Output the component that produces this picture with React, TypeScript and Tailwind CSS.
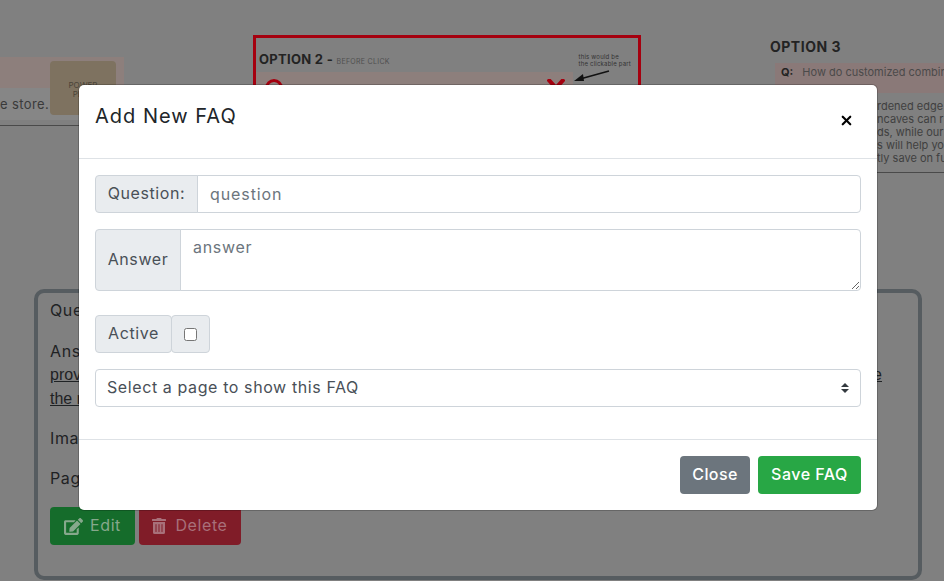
import { X } from "lucide-react";
import { FaEdit, FaTrashAlt } from "react-icons/fa";

const font = "[font-family:Inter,'Liberation_Sans',sans-serif]";

// what is left visible of the faq preview page behind the modal, colours already dimmed
const PageBehind = () => {
    return (
        <div className="w-[944px] h-[581px] overflow-hidden bg-[#808080] flex flex-col text-[#1f2224]">
            <div className="h-[289px] shrink-0 flex items-start">
                <div className="relative w-[124px] mt-[57px] shrink-0 h-[69px] border-b border-[#4a4a4a]">
                    <div className="h-[31px] bg-[#8d7f7c]"></div>
                    <div className="h-[32px] bg-[#868686] text-[13px] tracking-[0.4px] leading-[32px] text-right pr-[80px] text-[#3a3a3a] whitespace-nowrap">e store.</div>
                    <div className="absolute left-[50px] top-[4px] w-[66px] h-[54px] bg-[#7e7260] rounded-[4px] text-center text-[8px] leading-[9px] pt-[20px] text-[#4a4438]">POWER<br />PLUS</div>
                </div>
                <div className="relative ml-[129px] mt-[35px] w-[388px] h-[100px] shrink-0 border-[3px] border-[#a5000f] px-[3px] pt-[12px]">
                    <div className="flex justify-between">
                        <p className="text-[13px] font-bold leading-[18px] tracking-[0.3px] text-[#232323]">OPTION 2 - <span className="text-[7px] font-normal tracking-[0.3px] text-[#4f4f4f]">BEFORE CLICK</span></p>
                        <p className="text-[6px] leading-[7px] mt-[3px] mr-[4px] whitespace-nowrap tracking-[0.2px] text-[#333]">this would be<br />the clickable part</p>
                    </div>
                    <div className="flex items-start justify-between w-[317px] h-[30px] -ml-[3px] mt-[1px] bg-[#8d7f7c] pl-[9px] pr-[8px] pt-[7px]">
                        <svg width="18" height="18" viewBox="0 0 18 18"><circle cx="9" cy="9" r="7.5" fill="none" stroke="#a5000f" strokeWidth="3" /></svg>
                        <svg width="18" height="18" viewBox="0 0 18 18"><path d="M1 0 L17 18 M17 0 L1 18" stroke="#a5000f" strokeWidth="4" fill="none" /></svg>
                    </div>
                    <svg className="absolute left-[316px] top-[31px]" width="40" height="16" viewBox="0 0 40 16"><path d="M37 2 L8 10" stroke="#111" strokeWidth="1.5" /><path d="M2 12 L11 5 L12 12 Z" fill="#111" /></svg>
                </div>
                <div className="ml-[129px] mt-[39px] w-[175px] shrink-0">
                    <p className="text-[14px] font-bold leading-[16px] tracking-[0.5px] text-[#232323]">OPTION 3</p>
                    <div className="mt-[8px] ml-[5px] h-[30px] bg-[#8a7978] pl-[6px] text-[11px] leading-[14px] pt-[2px] whitespace-nowrap text-[#4a4a4a]"><b className="text-[#232323] mr-[6px]">Q:</b> How do customized combin</div>
                    <div className="h-[80px] border-b border-[#4a4a4a] pl-[107px] text-[11px] leading-[13px] pt-[7px] text-[#3f3f3f] whitespace-nowrap">
                        <p>rdened edge</p>
                        <p>ncaves can r</p>
                        <p>ds, while our</p>
                        <p>s will help yo</p>
                        <p>tly save on fu</p>
                    </div>
                </div>
            </div>
            <div className="ml-[34px] w-[888px] h-[291px] shrink-0 border-[4px] border-[#565c60] rounded-[10px] pl-[12px] pt-[5px] text-[16px] tracking-[0.6px]">
                <p className="leading-[24px]">Question</p>
                <p className="mt-[17px] leading-[24px]">Answer</p>
                <p className="leading-[24px] underline tracking-normal [font-family:'Liberation_Sans',sans-serif] flex justify-between w-[832px]"><span>provide</span><span>e</span></p>
                <p className="leading-[24px] underline tracking-normal [font-family:'Liberation_Sans',sans-serif]">the right</p>
                <p className="mt-[15px] leading-[24px]">Image</p>
                <p className="mt-[16px] leading-[24px]">Page</p>
                <div className="flex gap-[4px] mt-[17px]">
                    <button className="w-[85px] h-[38px] bg-[#156c2b] text-[#86a88c] rounded pb-[2px] flex items-center justify-center gap-[7px]"><FaEdit className="w-[19px] h-[17px] mt-[2px]" />Edit</button>
                    <button className="w-[102px] h-[38px] bg-[#801c28] text-[#a8707a] rounded pb-[2px] flex items-center justify-center gap-[9px]"><FaTrashAlt className="w-[14px] h-[16px] mt-[2px]" />Delete</button>
                </div>
            </div>
        </div>
    );
};

const App = () => {
    return (
        <div className={`relative w-[944px] h-[581px] overflow-hidden ${font}`}>
            <PageBehind />
            <div className="absolute left-[79px] top-[85px] w-[798px] h-[425px] bg-white rounded-[5px] shadow-[0_0_0_1px_rgba(0,0,0,0.2)] text-[#495057] text-[16px] tracking-[0.6px] flex flex-col">
                <div className="h-[74px] shrink-0 border-b border-[#dee2e6] px-[16px] flex justify-between">
                    <h5 className="text-[20px] leading-[30px] mt-[16px] text-[#212529] tracking-[1px]">Add New FAQ</h5>
                    <X className="w-[15px] h-[15px] mt-[28px] mr-[7px] text-black" strokeWidth={3.5} />
                </div>
                <div className="flex-1 px-[16px] pt-[16px] flex flex-col">
                    <div className="flex h-[38px]">
                        <span className="w-[103px] shrink-0 bg-[#e9ecef] border border-[#ced4da] rounded-l flex items-center justify-center pb-[2px]">Question:</span>
                        <input className="flex-1 -ml-px min-w-0 border border-[#ced4da] rounded-r px-[12px] pb-[1px] tracking-[0.9px] placeholder:text-[#6c757d] outline-none" placeholder="question" />
                    </div>
                    <div className="flex h-[62px] mt-[16px]">
                        <span className="w-[86px] shrink-0 bg-[#e9ecef] border border-[#ced4da] rounded-l flex items-center justify-center pb-[2px]">Answer</span>
                        <textarea className="flex-1 -ml-px min-w-0 border border-[#ced4da] rounded-r px-[12px] py-[5px] leading-[24px] tracking-[0.7px] placeholder:text-[#6c757d] outline-none" placeholder="answer"></textarea>
                    </div>
                    <div className="flex h-[38px] mt-[24px]">
                        <span className="w-[77px] shrink-0 bg-[#e9ecef] border border-[#ced4da] rounded flex items-center justify-center pb-[2px]">Active</span>
                        <span className="w-[39px] -ml-px shrink-0 bg-[#e9ecef] border border-[#ced4da] rounded flex items-center justify-center">
                            <span className="w-[13px] h-[13px] bg-white border border-[#767676] rounded-[2.5px]"></span>
                        </span>
                    </div>
                    <div className="flex items-center justify-between h-[38px] mt-[16px] border border-[#ced4da] rounded pl-[11px] pr-[11px]">
                        <span className="pb-[2px]">Select a page to show this FAQ</span>
                        <svg width="8" height="10" viewBox="0 0 8 10" className="text-[#343a40]"><path d="M4 0 L8 4 H0 Z M0 6 H8 L4 10 Z" fill="currentColor" /></svg>
                    </div>
                </div>
                <div className="h-[71px] shrink-0 border-t border-[#dee2e6] px-[16px] flex items-center justify-end gap-[8px]">
                    <button className="w-[70px] h-[38px] bg-[#6c757d] text-white font-medium rounded pb-[2px] tracking-[0.4px]">Close</button>
                    <button className="w-[103px] h-[38px] bg-[#28a745] text-white font-medium rounded pb-[2px] tracking-[0.5px]">Save FAQ</button>
                </div>
            </div>
        </div>
    );
};

export default App;
